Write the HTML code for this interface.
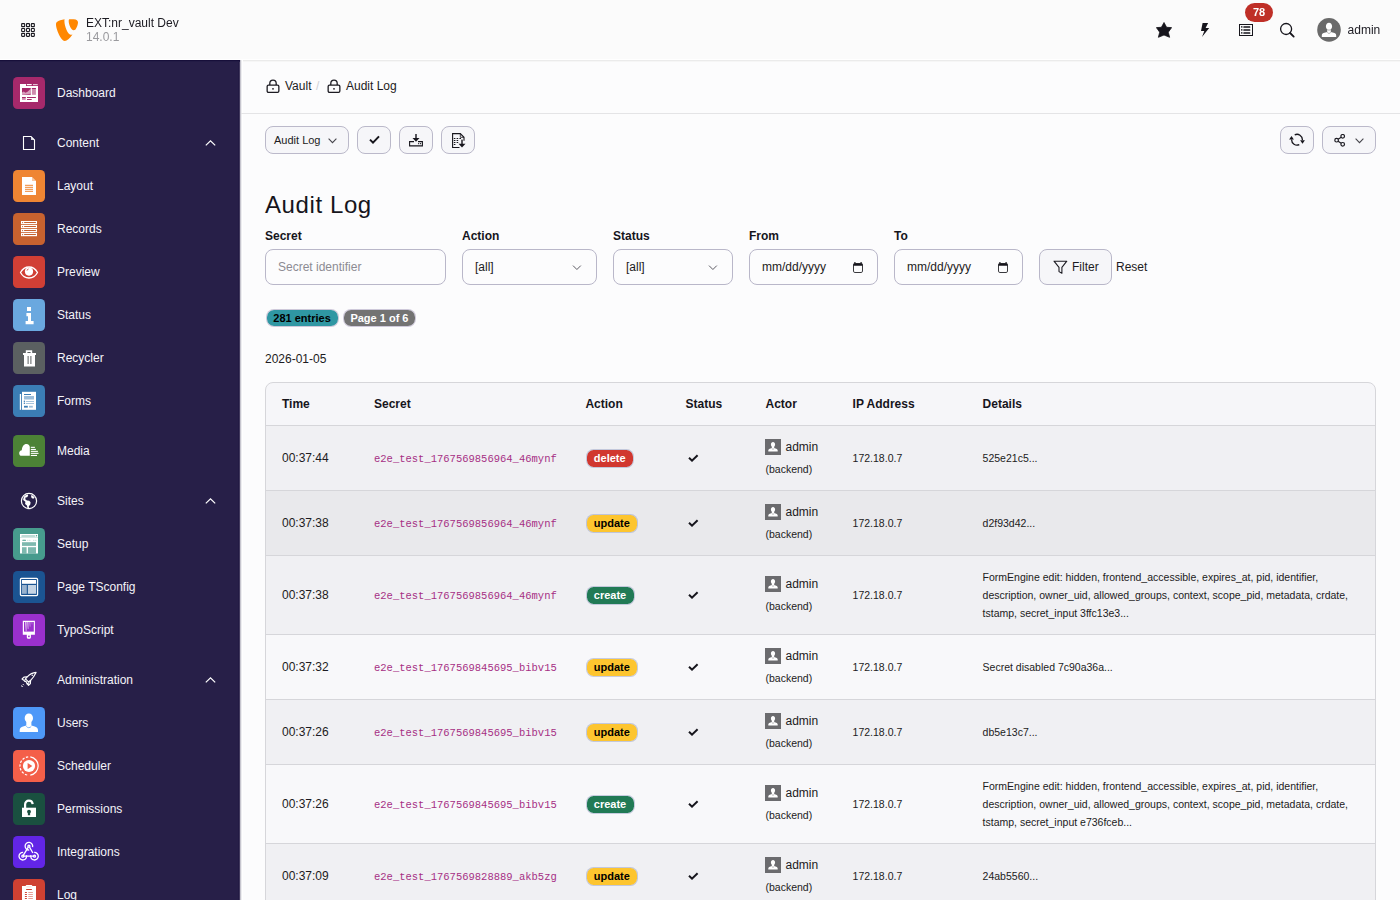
<!DOCTYPE html>
<html><head><meta charset="utf-8"><title>Audit Log</title>
<style>
*{box-sizing:border-box;margin:0;padding:0}
html,body{width:1400px;height:900px;overflow:hidden}
body{position:relative;font-family:"Liberation Sans",sans-serif;background:#fcfcfd;color:#1c1b22;font-size:12px}
.a{position:absolute}
.t{position:absolute;white-space:nowrap;line-height:14px}
svg{display:block}
#hdr{position:absolute;left:0;top:0;width:1400px;height:60px;background:#fbfbfb;border-bottom:1px solid #fff;will-change:transform}
#sb{position:absolute;left:0;top:60px;width:240px;height:840px;background:#271f48;overflow:hidden}
#sbedge{position:absolute;left:238px;top:60px;width:2px;height:840px;background:linear-gradient(90deg,#221a44 50%,#423a5e 50%)}
#sbsh{position:absolute;left:240px;top:60px;width:3px;height:840px;background:linear-gradient(90deg,#c6c5ce 33.3%,#ededf0 33.3%,#ededf0 66.6%,#fff 66.6%)}
.mi{position:absolute;left:13px;width:32px;height:32px}
.ml{position:absolute;left:57px;color:#f4f3f8;font-size:12px;line-height:14px;white-space:nowrap}
.btn{position:absolute;top:126px;height:28px;border:1px solid #bbb9ca;border-radius:8px;background:#f6f6f9}
.lbl{position:absolute;top:229px;font-weight:bold;font-size:12px;line-height:14px;color:#16151c}
.inp{position:absolute;top:249px;height:36px;border:1px solid #b9b7c9;border-radius:8px;background:#fcfcfd}
.itx{position:absolute;top:10px;font-size:12px;line-height:14px;color:#1c1b22;white-space:nowrap}
</style></head><body>

<!-- HEADER -->
<div id="hdr">
 <svg class="a" style="left:21px;top:23px" width="14" height="14" viewBox="0 0 14 14" fill="none" stroke="#1c1b22" stroke-width="1.1">
  <rect x="0.65" y="0.65" width="3" height="3" rx=".5"/><rect x="5.5" y="0.65" width="3" height="3" rx=".5"/><rect x="10.35" y="0.65" width="3" height="3" rx=".5"/>
  <rect x="0.65" y="5.5" width="3" height="3" rx=".5"/><rect x="5.5" y="5.5" width="3" height="3" rx=".5"/><rect x="10.35" y="5.5" width="3" height="3" rx=".5"/>
  <rect x="0.65" y="10.35" width="3" height="3" rx=".5"/><rect x="5.5" y="10.35" width="3" height="3" rx=".5"/><rect x="10.35" y="10.35" width="3" height="3" rx=".5"/>
 </svg>
 <svg class="a" style="left:56px;top:19px" width="22" height="22" viewBox="0 0 22 22">
  <path fill="#ff8700" d="M8.7 0.2C5.5 0.6 2.6 1.6 0.9 2.9C0.2 3.5 0 4.3 0 5.6C0 10.2 4.9 22 8.8 22C10.9 22 13.7 19.5 16.5 15.5C15.9 15.7 15.2 15.8 14.6 15.8C11.9 15.8 8.4 7.2 8.4 1.8C8.4 1 8.5 0.5 8.7 0.2Z"/>
  <path fill="#ff8700" d="M13.2 0.2C12.8 0.5 12.7 1 12.7 1.9C12.7 5.5 15.2 11.2 17.6 11.2C18.3 11.2 19 10.9 19.5 10.4C20.9 8.1 22 5.4 22 3.4C22 1.6 20.6 0.2 17.7 0.2C16.2 0.2 14.6 0.1 13.2 0.2Z"/>
 </svg>
 <div class="t" style="left:86px;top:16px;font-size:12px;color:#1c1b22">EXT:nr_vault Dev</div>
 <div class="t" style="left:86px;top:30px;font-size:12px;color:#9a9a9e">14.0.1</div>

 <!-- star -->
 <svg class="a" style="left:1156px;top:22px" width="16" height="16" viewBox="0 0 16 16"><path fill="#16151c" stroke="#16151c" stroke-width=".8" stroke-linejoin="round" d="M8 .5L10.6 5.3 15.6 5.6 12.3 10.2 13.6 15.3 8 13 2.4 15.3 3.7 10.2 .4 5.6 5.4 5.3Z"/></svg>
 <!-- bolt -->
 <svg class="a" style="left:1200px;top:22px" width="12" height="16" viewBox="0 0 12 16"><path fill="#16151c" d="M2.6 1H8.1L5.6 6H9.2L2 15.1 4.3 8.9H1Z"/></svg>
 <!-- list -->
 <svg class="a" style="left:1239px;top:24px" width="14" height="12" viewBox="0 0 14 12"><rect x=".5" y=".5" width="13" height="11" fill="none" stroke="#16151c" stroke-width="1"/><g fill="#16151c"><circle cx="2.8" cy="2.9" r=".8"/><circle cx="2.8" cy="5.9" r=".8"/><circle cx="2.8" cy="8.9" r=".8"/><rect x="4.3" y="2.2" width="7" height="1.5" rx=".5"/><rect x="4.3" y="5.2" width="7" height="1.5" rx=".5"/><rect x="4.3" y="8.2" width="7" height="1.5" rx=".5"/></g></svg>
 <!-- badge 78 -->
 <div class="a" style="left:1245px;top:3px;width:28px;height:19px;border-radius:9.5px;background:#bf2f27;color:#fff;font-weight:bold;font-size:11px;line-height:19px;text-align:center">78</div>
 <!-- search -->
 <svg class="a" style="left:1279px;top:22px" width="16" height="16" viewBox="0 0 16 16" fill="none" stroke="#16151c"><circle cx="7.1" cy="7" r="5.5" stroke-width="1.3"/><path d="M11.1 11l3.6 3.6" stroke-width="1.8" stroke-linecap="round"/></svg>
 <!-- avatar -->
 <svg class="a" style="left:1317px;top:18px" width="24" height="24" viewBox="0 0 24 24"><circle cx="12" cy="11.9" r="11.8" fill="#6a6a6a"/><path fill="#fff" d="M12 4.7c-1.8 0-3.1 1.5-3.1 3.6 0 1.3.5 2.4 1.3 3.1v2.6l-3.7 1.1c-1.3.4-1.7 1.5-1.7 2.6V19h14.4v-1.3c0-1.1-.4-2.2-1.7-2.6l-3.7-1.1v-2.6c.8-.7 1.3-1.8 1.3-3.1 0-2.1-1.3-3.6-3.1-3.6z"/><path d="M10.2 14.3c.5.7 1.1 1.1 1.8 1.1s1.3-.4 1.8-1.1M10.2 11.6c.5.3 1.1.5 1.8.5s1.3-.2 1.8-.5" stroke="#6a6a6a" stroke-width=".5" fill="none"/></svg>
 <div class="t" style="left:1347.6px;top:23px;font-size:12px;color:#1c1b22">admin</div>
</div>

<!-- SIDEBAR -->
<div id="sb">
</div>
<div id="sbedge"></div>
<div class="a" style="left:0;top:60px;width:240px;height:1px;background:#170f3a"></div><div class="a" style="left:0;top:61px;width:240px;height:1px;background:#221b45"></div>
<div class="a" style="left:240px;top:60px;width:1160px;height:1px;background:#ebebeb"></div><div class="a" style="left:240px;top:61px;width:1160px;height:1px;background:#f6f6f6"></div>
<div id="sbsh"></div>
<!--SBITEMS-->
<svg class="mi" style="top:77px" viewBox="0 0 32 32"><rect width="32" height="32" rx="4.5" fill="#a6296b"/><g transform=""><path fill="#fff" d="M7 7h6v2h12v16H7z"/><rect x="13.8" y="7" width="4.9" height="1.2" fill="#fff"/><rect x="20" y="7" width="4.7" height="1.2" fill="#fff" opacity=".7"/><rect x="9" y="11" width="8.8" height="6.8" fill="#a6296b"/><path d="M9 17.8v-2.2l1.8-1 1.7 1.2 2-1 3.3-3v5z" fill="#fff" opacity=".55"/><rect x="18.9" y="11" width="4" height="6.8" fill="#a6296b" opacity=".55"/><rect x="18.9" y="11" width="4" height="1" fill="#a6296b"/><rect x="9" y="20" width="3.7" height="2.9" fill="#a6296b" opacity=".55"/><rect x="9" y="20" width="3.7" height="1" fill="#a6296b"/><rect x="14" y="20" width="8.9" height="1" fill="#a6296b"/><rect x="14" y="22" width="4.7" height="1" fill="#a6296b"/></g></svg>
<div class="ml" style="top:86px">Dashboard</div>
<svg class="a" style="left:22px;top:135px" width="14" height="16" viewBox="0 0 14 16"><path fill="none" stroke="#fff" stroke-width="1.1" d="M1.5 1.5h7.5l3.5 3.5v9.5H1.5z"/><path fill="#fff" d="M9 1.5l3.5 3.5H9z" opacity=".8"/></svg>
<svg class="a" style="left:205px;top:140px" width="11" height="6" viewBox="0 0 11 6"><path d="M.8 5.4L5.5.9l4.7 4.5" fill="none" stroke="#fff" stroke-width="1.2"/></svg>
<div class="ml" style="top:136px">Content</div>
<svg class="mi" style="top:170px" viewBox="0 0 32 32"><rect width="32" height="32" rx="4.5" fill="#ef8533"/><g transform=""><path fill="#fff" d="M9 7h10l4 4v14H9z"/><path fill="#ef8533" opacity=".45" d="M19 7l4 4h-4z"/><path stroke="#ef8533" stroke-width="1" d="M12 15.3h8M12 17.3h8M12 19.3h8M12 21.3h8"/></g></svg>
<div class="ml" style="top:179px">Layout</div>
<svg class="mi" style="top:213px" viewBox="0 0 32 32"><rect width="32" height="32" rx="4.5" fill="#c8622f"/><g transform=""><rect x="8" y="8" width="16" height="3.2" fill="#fff"/><rect x="11" y="9.1" width="12" height="1" rx=".5" fill="#c8622f"/><circle cx="9.6" cy="9.6" r=".6" fill="#c8622f"/><rect x="8" y="12" width="16" height="3.2" fill="#fff"/><rect x="11" y="13.1" width="12" height="1" rx=".5" fill="#c8622f"/><circle cx="9.6" cy="13.6" r=".6" fill="#c8622f"/><rect x="8" y="16" width="16" height="3.2" fill="#fff"/><rect x="11" y="17.1" width="12" height="1" rx=".5" fill="#c8622f"/><circle cx="9.6" cy="17.6" r=".6" fill="#c8622f"/><rect x="8" y="20" width="16" height="3.2" fill="#fff"/><rect x="11" y="21.1" width="12" height="1" rx=".5" fill="#c8622f"/><circle cx="9.6" cy="21.6" r=".6" fill="#c8622f"/></g></svg>
<div class="ml" style="top:222px">Records</div>
<svg class="mi" style="top:256px" viewBox="0 0 32 32"><rect width="32" height="32" rx="4.5" fill="#d13f35"/><g transform=""><path fill="none" stroke="#fff" stroke-width="1.3" d="M7.5 16.5C9.5 12.8 12.5 11 16 11s6.5 1.8 8.5 5.5c-2 3.7-5 5.5-8.5 5.5s-6.5-1.8-8.5-5.5z"/><circle cx="16" cy="15.6" r="4.1" fill="#fff"/><path d="M14 14.6c.2-.9.7-1.4 1.5-1.6" stroke="#d13f35" stroke-width=".9" fill="none"/></g></svg>
<div class="ml" style="top:265px">Preview</div>
<svg class="mi" style="top:299px" viewBox="0 0 32 32"><rect width="32" height="32" rx="4.5" fill="#6aa8df"/><g transform=""><rect x="14" y="8" width="4" height="4" fill="#fff"/><path fill="#fff" d="M13.4 14h4.6v8h2.6v3.2h-8v-3.2h2.4v-4.8h-1.6z"/></g></svg>
<div class="ml" style="top:308px">Status</div>
<svg class="mi" style="top:342px" viewBox="0 0 32 32"><rect width="32" height="32" rx="4.5" fill="#5b6061"/><g transform=""><path fill="#fff" d="M12.8 8.2h6.4v2.8H23v2h-1V24.5H11V13h-1v-2h2.8zM14.4 10v1h3.2v-1z"/><rect x="14.6" y="14" width="1" height="8" fill="#5b6061"/><rect x="17.4" y="14" width="1" height="8" fill="#5b6061"/></g></svg>
<div class="ml" style="top:351px">Recycler</div>
<svg class="mi" style="top:385px" viewBox="0 0 32 32"><rect width="32" height="32" rx="4.5" fill="#3b7db5"/><g transform="translate(-1 -1)"><rect x="10" y="7.8" width="14" height="18" fill="#fff"/><rect x="7.8" y="10" width="1.3" height="15.8" fill="#fff"/><rect x="12" y="10" width="7" height="1" fill="#3b7db5"/><rect x="12" y="12" width="10" height="3.5" fill="#3b7db5" opacity=".5"/><circle cx="12.4" cy="17.3" r=".8" fill="#3b7db5"/><rect x="14" y="17" width="8" height=".9" fill="#3b7db5" opacity=".5"/><circle cx="12.4" cy="19.3" r=".8" fill="#3b7db5"/><rect x="14" y="19" width="8" height=".9" fill="#3b7db5" opacity=".5"/><rect x="12" y="21.8" width="3.8" height="1.8" fill="#3b7db5"/><rect x="17" y="21.8" width="3.8" height="1.8" fill="#3b7db5" opacity=".5"/></g></svg>
<div class="ml" style="top:394px">Forms</div>
<svg class="mi" style="top:435px" viewBox="0 0 32 32"><rect width="32" height="32" rx="4.5" fill="#4c8236"/><g transform=""><path fill="#fff" d="M16.8 20.8H8.6C7.2 20.8 6.2 19.8 6.2 18.2C6.2 16.6 7.3 15.3 8.8 15.2C9 11.5 10.8 8.9 13.5 8.9C15.5 8.9 16.8 10.3 16.8 12Z"/><g fill="#fff"><rect x="17.8" y="11.8" width="4.1" height="1.1"/><rect x="17.8" y="13.9" width="5.1" height="1.1"/><rect x="17.8" y="15.8" width="7.1" height="1.1"/><rect x="17.8" y="17.8" width="7.7" height="1.1"/><rect x="17.8" y="19.9" width="6.2" height="1.1"/></g></g></svg>
<div class="ml" style="top:444px">Media</div>
<svg class="a" style="left:20px;top:492px" width="18" height="18" viewBox="0 0 18 18"><circle cx="9" cy="9" r="7.6" fill="none" stroke="#fff" stroke-width="1.2"/><path fill="#fff" d="M4.2 4.2c1.2-1 2.4-1.6 3.6-1.8l.4 1.3-1.1 1.6-1.6.2-.2 1.7 1.6 1.4 2.3.2 1.4 1.5-.3 2.3-1.5 1.6.2 1.8c-.5.1-1 .1-1.5 0l-.6-2.5-1.8-1.6.3-2.1-2.3-1.9c.2-1.4.5-2.7 1.1-3.7zM11.3 3l1.8.8 1.6 2-1.5.9-1.6-.7-.5-1.6z"/></svg>
<svg class="a" style="left:205px;top:498px" width="11" height="6" viewBox="0 0 11 6"><path d="M.8 5.4L5.5.9l4.7 4.5" fill="none" stroke="#fff" stroke-width="1.2"/></svg>
<div class="ml" style="top:494px">Sites</div>
<svg class="mi" style="top:528px" viewBox="0 0 32 32"><rect width="32" height="32" rx="4.5" fill="#479b8d"/><g transform="translate(0 -0.8)"><rect x="7" y="6.8" width="18" height="19.5" fill="#fff"/><rect x="8.3" y="8.2" width="14" height="1" rx=".5" fill="#479b8d" opacity=".7"/><circle cx="23.5" cy="8.6" r=".7" fill="#479b8d"/><rect x="7" y="10.2" width="18" height=".6" fill="#479b8d" opacity=".4"/><rect x="9.3" y="12.6" width="3.7" height="1" rx=".5" fill="#479b8d"/><circle cx="14.8" cy="13.1" r=".5" fill="#479b8d" opacity=".5"/><circle cx="16.8" cy="13.1" r=".5" fill="#479b8d" opacity=".5"/><circle cx="20.8" cy="13.1" r=".5" fill="#479b8d" opacity=".5"/><circle cx="22.8" cy="13.1" r=".5" fill="#479b8d" opacity=".5"/><rect x="9" y="15" width="14" height="3.7" fill="#479b8d" opacity=".7"/><rect x="9" y="20" width="4.6" height="6.3" fill="#479b8d" opacity=".7"/><rect x="15" y="20" width="8" height="6.3" fill="#479b8d" opacity=".7"/></g></svg>
<div class="ml" style="top:537px">Setup</div>
<svg class="mi" style="top:571px" viewBox="0 0 32 32"><rect width="32" height="32" rx="4.5" fill="#1b5492"/><g transform=""><rect x="7.45" y="7.45" width="17.1" height="17.1" rx="1" fill="none" stroke="#fff" stroke-width="1.3"/><rect x="9" y="9" width="14" height="3.8" fill="#fff"/><rect x="9" y="14" width="4.8" height="8.8" fill="#fff" opacity=".55"/><rect x="14.9" y="14" width="8.1" height="8.8" fill="#fff" opacity=".75"/></g></svg>
<div class="ml" style="top:580px">Page TSconfig</div>
<svg class="mi" style="top:614px" viewBox="0 0 32 32"><rect width="32" height="32" rx="4.5" fill="#9a30cd"/><g transform=""><path fill="#fff" d="M9.8 6.8h12.1v14H17.9v2.4c0 .8-.6 1.5-1.4 1.5h-1.3c-.8 0-1.4-.7-1.4-1.5v-2.4H9.8z"/><rect x="11" y="8" width="9.8" height="9.6" fill="#9a30cd"/><rect x="15.1" y="21.6" width="1.6" height="1.6" fill="#9a30cd"/><path fill="#fff" d="M12.3 8h1.1v9.2h-.6z"/><path fill="#fff" opacity=".8" d="M14.3 8h1.1v7h-.6z"/><path fill="#fff" opacity=".55" d="M16.3 8h1.1v4.8h-.6z"/><path fill="#fff" opacity=".35" d="M18.3 8h1.1v2.6h-.6z"/></g></svg>
<div class="ml" style="top:623px">TypoScript</div>
<svg class="a" style="left:20px;top:671px" width="17.5" height="17.5" viewBox="0 0 16 16"><g fill="none" stroke="#fff" stroke-width="1.05" stroke-linejoin="round"><path d="M14.7 1.3C11.5 1.5 8.9 3 6.6 5.4L5 7.2 7.9 10.1l1.8-1.6c2.3-2.2 3.8-4.8 5-7.2z"/><path d="M6.6 5.4L3.6 5.6 1.9 7.3l1.8 1.4"/><path d="M9.7 8.5l-.2 3-1.7 1.7-1.4-1.8"/><path d="M5 7.2l-.9 2.2 1.8.5.5 1.8 2.3-.9"/></g><circle cx="11.2" cy="3.9" r=".7" fill="#fff"/><path stroke="#fff" stroke-width=".9" d="M1.4 13.2l1 1M2.6 12l.9.9M1.4 14.6l.8-.8"/></svg>
<svg class="a" style="left:205px;top:677px" width="11" height="6" viewBox="0 0 11 6"><path d="M.8 5.4L5.5.9l4.7 4.5" fill="none" stroke="#fff" stroke-width="1.2"/></svg>
<div class="ml" style="top:673px">Administration</div>
<svg class="mi" style="top:707px" viewBox="0 0 32 32"><rect width="32" height="32" rx="4.5" fill="#4e98f8"/><g transform=""><path fill="#fff" d="M15.8 6.6c-2.3 0-4.1 2-4.1 4.5 0 1.6.6 2.9 1.6 3.8v3.6l-3.3 1c-1.8.5-3.3 1.8-3.3 3.6V25h18.3v-1.9c0-1.8-1.5-3.1-3.3-3.6l-3.3-1v-3.6c1-.9 1.6-2.2 1.6-3.8 0-2.5-1.8-4.5-4.1-4.5z"/><path d="M13.3 19.3c.7.9 1.5 1.4 2.5 1.4s1.8-.5 2.5-1.4" stroke="#4e98f8" stroke-width=".7" fill="none"/></g></svg>
<div class="ml" style="top:716px">Users</div>
<svg class="mi" style="top:750px" viewBox="0 0 32 32"><rect width="32" height="32" rx="4.5" fill="#f45f49"/><g transform=""><path fill="none" stroke="#fff" stroke-width="1.2" d="M17.3 6.9A9.2 9.2 0 0 1 17.3 25.1"/><path fill="none" stroke="#fff" stroke-width="1.2" stroke-dasharray="2.4 1.5" d="M15.2 6.85A9.2 9.2 0 0 0 15.2 25.15"/><circle cx="16" cy="16" r="6.1" fill="#fff"/><path fill="#f45f49" d="M14.6 13v6.2l4.7-3.1z"/></g></svg>
<div class="ml" style="top:759px">Scheduler</div>
<svg class="mi" style="top:793px" viewBox="0 0 32 32"><rect width="32" height="32" rx="4.5" fill="#1a5040"/><g transform=""><path fill="none" stroke="#fff" stroke-width="2.2" d="M12.1 15.2v-3.6c0-2.3 1.6-3.9 3.8-3.9 2 0 3.5 1.3 3.8 3.4"/><rect x="9" y="14.7" width="14" height="9.3" fill="#fff"/><circle cx="16" cy="18.7" r="1.9" fill="#1a5040"/><path fill="#1a5040" d="M15.1 19.3h1.8l.3 3h-2.4z"/></g></svg>
<div class="ml" style="top:802px">Permissions</div>
<svg class="mi" style="top:836px" viewBox="0 0 32 32"><rect width="32" height="32" rx="4.5" fill="#6225e6"/><g transform=""><g fill="none" stroke="#fff" stroke-width="1.3"><path d="M16.23 13.99A3.8 3.8 0 1 1 19.57 11.18"/><path d="M13.47 19.22A3.8 3.8 0 1 1 10.13 16.41"/><path d="M21.17 16.41A3.8 3.8 0 1 1 17.83 19.22"/><circle cx="15.9" cy="10.2" r="1"/><circle cx="9.8" cy="20.2" r="1"/><circle cx="21.5" cy="20.2" r="1"/><path d="M15.3 11.2L10.4 19.2M10.8 20.2H20.5M16.5 11.2L19.9 17"/></g></g></svg>
<div class="ml" style="top:845px">Integrations</div>
<svg class="mi" style="top:879px" viewBox="0 0 32 32"><rect width="32" height="32" rx="4.5" fill="#cf4132"/><g transform=""><rect x="9" y="7" width="14" height="19" fill="#fff"/><rect x="12.7" y="5.9" width="6.6" height="2.2" rx="1" fill="#fff"/><rect x="13.5" y="7.7" width="5" height=".5" fill="#cf4132" opacity=".4"/><rect x="13" y="9.9" width="6" height="1.2" rx=".6" fill="#cf4132"/><rect x="11.8" y="12.9" width="2.2" height="1.1" rx=".5" fill="#cf4132"/><rect x="15.2" y="12.9" width="4.8" height="1.1" rx=".5" fill="#cf4132" opacity=".5"/><rect x="11.8" y="14.9" width="2.2" height="1.1" rx=".5" fill="#cf4132"/><rect x="15.2" y="14.9" width="4.8" height="1.1" rx=".5" fill="#cf4132" opacity=".5"/><rect x="11.8" y="16.9" width="2.2" height="1.1" rx=".5" fill="#cf4132"/><rect x="15.2" y="16.9" width="4.8" height="1.1" rx=".5" fill="#cf4132" opacity=".5"/><rect x="11.8" y="18.9" width="2.2" height="1.1" rx=".5" fill="#cf4132"/><rect x="15.2" y="18.9" width="4.8" height="1.1" rx=".5" fill="#cf4132" opacity=".5"/><rect x="11.8" y="20.9" width="2.2" height="1.1" rx=".5" fill="#cf4132"/><rect x="15.2" y="20.9" width="4.8" height="1.1" rx=".5" fill="#cf4132" opacity=".5"/></g></svg>
<div class="ml" style="top:888px">Log</div>

<!--/SBITEMS-->

<!-- CONTENT -->
<div id="content">
 <!-- breadcrumb -->
 <div class="a" style="left:241px;top:113px;width:1159px;height:1px;background:#e4e4e6"></div>
 <svg class="a" style="left:266px;top:79px" width="14" height="14" viewBox="0 0 14 14" fill="none" stroke="#1c1b22" stroke-width="1.3"><rect x="1.15" y="6.15" width="11.7" height="7.2" rx="1.3"/><path d="M3.8 6.1V4.4c0-1.9 1.3-3.2 3.2-3.2s3.2 1.3 3.2 3.2v1.7"/><circle cx="7" cy="9.8" r=".9" fill="#1c1b22" stroke="none"/></svg>
 <div class="t" style="left:285px;top:79px">Vault</div>
 <div class="t" style="left:316px;top:79px;color:#cfcfd4">/</div>
 <svg class="a" style="left:327px;top:79px" width="14" height="14" viewBox="0 0 14 14" fill="none" stroke="#1c1b22" stroke-width="1.3"><rect x="1.15" y="6.15" width="11.7" height="7.2" rx="1.3"/><path d="M3.8 6.1V4.4c0-1.9 1.3-3.2 3.2-3.2s3.2 1.3 3.2 3.2v1.7"/><circle cx="7" cy="9.8" r=".9" fill="#1c1b22" stroke="none"/></svg>
 <div class="t" style="left:346px;top:79px">Audit Log</div>

 <!-- toolbar -->
 <div class="btn" style="left:265px;width:84px"><div class="t" style="left:8px;top:6px;font-size:11px">Audit Log</div>
  <svg class="a" style="left:62px;top:11px" width="9" height="6" viewBox="0 0 9 6"><path d="M.6 .7l3.9 3.9L8.4.7" fill="none" stroke="#46454c" stroke-width="1.1"/></svg></div>
 <div class="btn" style="left:357px;width:34px"><svg class="a" style="left:11px;top:8px" width="11" height="9" viewBox="0 0 11 9"><path d="M1 4.6l3 3 6-6.2" fill="none" stroke="#16151c" stroke-width="2"/></svg></div>
 <div class="btn" style="left:399px;width:34px"><svg class="a" style="left:9px;top:7px" width="14" height="13" viewBox="0 0 14 13"><rect x="6.3" y="0" width="1.4" height="4.6" fill="#16151c"/><path d="M3.5 4h7L7 7.8z" fill="#16151c"/><path d="M5 7.6H.6v4.3h12.8V7.6H9" fill="none" stroke="#16151c" stroke-width="1.1"/><rect x="9.1" y="9.1" width="1.1" height="1.1" fill="#16151c"/><rect x="11" y="9.1" width="1.1" height="1.1" fill="#16151c"/></svg></div>
 <div class="btn" style="left:441px;width:34px"><svg class="a" style="left:10px;top:6px" width="15" height="16" viewBox="0 0 15 16"><path d="M7.5 14.5H.6V.6h7.7L12 4.3v3.4" fill="none" stroke="#16151c" stroke-width="1.1"/><path d="M8.3.6v3.7H12" fill="none" stroke="#16151c" stroke-width=".8"/><g fill="#16151c"><rect x="1.8" y="5" width="1.6" height="1"/><rect x="4.6" y="5" width="1.6" height="1"/><rect x="7.4" y="5" width="1.6" height="1"/><rect x="1.8" y="7" width="1.6" height="1"/><rect x="4.6" y="7" width="1.6" height="1"/><rect x="1.8" y="9" width="1.6" height="1"/><rect x="4.6" y="9" width="1.6" height="1"/><rect x="1.8" y="11" width="1.6" height="1"/><rect x="9.3" y="6.6" width="1.4" height="4.6"/><path d="M6.5 10.8h7L10 14.6z"/></g></svg></div>
 <div class="btn" style="left:1280px;width:34px"><svg class="a" style="left:7px;top:6px" width="18" height="14" viewBox="0 0 18 14"><path d="M6.72 1.81A5.4 5.4 0 0 1 14.4 6.9M11.28 11.59A5.4 5.4 0 0 1 3.6 6.5" fill="none" stroke="#16151c" stroke-width="1.3"/><path d="M12.1 7.2h4.8l-2.4 3.6zM1.1 6.6h4.8L3.5 3z" fill="#16151c"/></svg></div>
 <div class="btn" style="left:1322px;width:54px"><svg class="a" style="left:11px;top:7px" width="12" height="13" viewBox="0 0 12 13" fill="none" stroke="#1c1b22" stroke-width="1.2"><circle cx="2.6" cy="6.2" r="1.8"/><circle cx="8.7" cy="2.3" r="1.8"/><circle cx="8.7" cy="10.3" r="1.8"/><path d="M4.1 5.2l3.1-2M4.1 7.2l3.1 2"/></svg>
  <svg class="a" style="left:32px;top:11px" width="9" height="6" viewBox="0 0 9 6"><path d="M.6 .7l3.9 3.9L8.4.7" fill="none" stroke="#46454c" stroke-width="1.1"/></svg></div>

 <!-- title -->
 <div class="t" style="left:265px;top:191px;font-size:24px;line-height:28px;letter-spacing:.6px;color:#16151c">Audit Log</div>

 <!-- filters -->
 <div class="lbl" style="left:265px">Secret</div>
 <div class="lbl" style="left:462px">Action</div>
 <div class="lbl" style="left:613px">Status</div>
 <div class="lbl" style="left:749px">From</div>
 <div class="lbl" style="left:894px">To</div>
 <div class="inp" style="left:265px;width:181px"><div class="itx" style="left:12px;color:#8c8b93">Secret identifier</div></div>
 <div class="inp" style="left:462px;width:135px"><div class="itx" style="left:12px">[all]</div><svg class="a" style="left:108.5px;top:15px" width="10" height="7" viewBox="0 0 10 7"><path d="M1 .6l3.9 3.9L8.8.6" fill="none" stroke="#5c5b63" stroke-width="1"/></svg></div>
 <div class="inp" style="left:613px;width:120px"><div class="itx" style="left:12px">[all]</div><svg class="a" style="left:93.5px;top:15px" width="10" height="7" viewBox="0 0 10 7"><path d="M1 .6l3.9 3.9L8.8.6" fill="none" stroke="#5c5b63" stroke-width="1"/></svg></div>
 <div class="inp" style="left:749px;width:129px"><div class="itx" style="left:12px">mm/dd/yyyy</div><svg class="a" style="left:103px;top:12px" width="10" height="11" viewBox="0 0 10 11"><path d="M1.9 0v1.8M8.1 0v1.8" stroke="#2a2a2e" stroke-width="1.3"/><rect x=".5" y="1.5" width="9" height="9" rx="1.4" fill="none" stroke="#3a3a3e" stroke-width="1"/><rect x=".5" y="1.5" width="9" height="2.3" rx=".6" fill="#16151c"/></svg></div>
 <div class="inp" style="left:894px;width:129px"><div class="itx" style="left:12px">mm/dd/yyyy</div><svg class="a" style="left:103px;top:12px" width="10" height="11" viewBox="0 0 10 11"><path d="M1.9 0v1.8M8.1 0v1.8" stroke="#2a2a2e" stroke-width="1.3"/><rect x=".5" y="1.5" width="9" height="9" rx="1.4" fill="none" stroke="#3a3a3e" stroke-width="1"/><rect x=".5" y="1.5" width="9" height="2.3" rx=".6" fill="#16151c"/></svg></div>
 <div class="inp" style="left:1039px;width:73px;background:#f6f6f9"><svg class="a" style="left:13px;top:10px" width="15" height="15" viewBox="0 0 15 15"><path d="M1 1.2h12.8L8.9 7.3v6L6 11.6V7.3z" fill="none" stroke="#1c1b22" stroke-width="1.1" stroke-linejoin="round"/></svg><div class="itx" style="left:32px">Filter</div></div>
 <div class="t" style="left:1116px;top:260px">Reset</div>

 <!-- badges -->
 <div class="a" style="left:265.5px;top:309.3px;height:18px;padding:0 6.8px;border:1px solid rgba(150,140,175,.45);background-clip:padding-box;border-radius:8px;background-color:#2f97a3;color:#000;font-weight:bold;font-size:11px;line-height:16px;white-space:nowrap">281 entries</div>
 <div class="a" style="left:342.6px;top:309.3px;height:18px;padding:0 6.8px;border:1px solid rgba(150,140,175,.45);background-clip:padding-box;border-radius:8px;background-color:#737373;color:#fff;font-weight:bold;font-size:11px;line-height:16px;white-space:nowrap">Page 1 of 6</div>
 <div class="t" style="left:265px;top:352px">2026-01-05</div>

 <!--TABLE-->
<div class="a" style="left:265px;top:382px;width:1111px;height:600px;border:1px solid #d6d6da;border-radius:8px;background:#f6f6f9;overflow:hidden">
<div class="a" style="left:0;top:42px;width:1109px;height:65px;background:#f0f0f3;border-top:1px solid #d6d6da"></div>
<div class="a" style="left:0;top:107px;width:1109px;height:65px;background:#e9e9ec;border-top:1px solid #d6d6da"></div>
<div class="a" style="left:0;top:172px;width:1109px;height:79px;background:#f0f0f3;border-top:1px solid #d6d6da"></div>
<div class="a" style="left:0;top:251px;width:1109px;height:65px;background:#f8f8fa;border-top:1px solid #d6d6da"></div>
<div class="a" style="left:0;top:316px;width:1109px;height:65px;background:#f0f0f3;border-top:1px solid #d6d6da"></div>
<div class="a" style="left:0;top:381px;width:1109px;height:79px;background:#f8f8fa;border-top:1px solid #d6d6da"></div>
<div class="a" style="left:0;top:460px;width:1109px;height:65px;background:#f0f0f3;border-top:1px solid #d6d6da"></div>
</div>
<div class="t" style="left:282px;top:397px;font-weight:bold;color:#16151c">Time</div>
<div class="t" style="left:374px;top:397px;font-weight:bold;color:#16151c">Secret</div>
<div class="t" style="left:585.4px;top:397px;font-weight:bold;color:#16151c">Action</div>
<div class="t" style="left:685.5px;top:397px;font-weight:bold;color:#16151c">Status</div>
<div class="t" style="left:765.5px;top:397px;font-weight:bold;color:#16151c">Actor</div>
<div class="t" style="left:852.6px;top:397px;font-weight:bold;color:#16151c">IP Address</div>
<div class="t" style="left:982.6px;top:397px;font-weight:bold;color:#16151c">Details</div>
<div class="t" style="left:282px;top:451px">00:37:44</div>
<div class="t" style="left:374px;top:452px;font-family:'Liberation Mono',monospace;font-size:10.5px;color:#a62f84">e2e_test_1767569856964_46mynf</div>
<div class="a" style="left:585.5px;top:449px;height:18.5px;padding:0 7.3px;border:1px solid rgba(150,160,195,.5);background-clip:padding-box;border-radius:7.5px;background-color:#d1372f;color:#fff;font-weight:bold;font-size:11px;line-height:16.3px;white-space:nowrap">delete</div>
<svg class="a" style="left:688px;top:454px" width="11" height="9" viewBox="0 0 11 9"><path d="M1 3.8L4 6.7 9.6 1.2" fill="none" stroke="#16151c" stroke-width="2"/></svg>
<svg class="a" style="left:765px;top:439px" width="16" height="16" viewBox="0 0 16 16"><rect width="16" height="16" fill="#6b6b6e"/><path fill="#fff" d="M8 3c-1.2 0-2.1 1.1-2.1 2.5 0 .9.4 1.7.9 2.2v1.4l-2 .6C3.9 10 3.3 10.8 3.3 11.6v1h9.4v-1c0-.8-.6-1.6-1.5-1.9l-2-.6V7.7c.5-.5.9-1.3.9-2.2C10.1 4.1 9.2 3 8 3z"/><path d="M6.8 9.5c.3.4.7.6 1.2.6s.9-.2 1.2-.6" stroke="#6b6b6e" stroke-width=".5" fill="none"/></svg>
<div class="t" style="left:785.5px;top:440px">admin</div>
<div class="t" style="left:765.5px;top:462px;font-size:10.5px">(backend)</div>
<div class="t" style="left:852.6px;top:451px;font-size:10.5px">172.18.0.7</div>
<div class="t" style="left:982.6px;top:451px;font-size:10.5px">525e21c5...</div>
<div class="t" style="left:282px;top:516px">00:37:38</div>
<div class="t" style="left:374px;top:517px;font-family:'Liberation Mono',monospace;font-size:10.5px;color:#a62f84">e2e_test_1767569856964_46mynf</div>
<div class="a" style="left:585.5px;top:514px;height:18.5px;padding:0 7.3px;border:1px solid rgba(150,160,195,.5);background-clip:padding-box;border-radius:7.5px;background-color:#fdc52f;color:#000;font-weight:bold;font-size:11px;line-height:16.3px;white-space:nowrap">update</div>
<svg class="a" style="left:688px;top:519px" width="11" height="9" viewBox="0 0 11 9"><path d="M1 3.8L4 6.7 9.6 1.2" fill="none" stroke="#16151c" stroke-width="2"/></svg>
<svg class="a" style="left:765px;top:504px" width="16" height="16" viewBox="0 0 16 16"><rect width="16" height="16" fill="#6b6b6e"/><path fill="#fff" d="M8 3c-1.2 0-2.1 1.1-2.1 2.5 0 .9.4 1.7.9 2.2v1.4l-2 .6C3.9 10 3.3 10.8 3.3 11.6v1h9.4v-1c0-.8-.6-1.6-1.5-1.9l-2-.6V7.7c.5-.5.9-1.3.9-2.2C10.1 4.1 9.2 3 8 3z"/><path d="M6.8 9.5c.3.4.7.6 1.2.6s.9-.2 1.2-.6" stroke="#6b6b6e" stroke-width=".5" fill="none"/></svg>
<div class="t" style="left:785.5px;top:505px">admin</div>
<div class="t" style="left:765.5px;top:527px;font-size:10.5px">(backend)</div>
<div class="t" style="left:852.6px;top:516px;font-size:10.5px">172.18.0.7</div>
<div class="t" style="left:982.6px;top:516px;font-size:10.5px">d2f93d42...</div>
<div class="t" style="left:282px;top:588px">00:37:38</div>
<div class="t" style="left:374px;top:589px;font-family:'Liberation Mono',monospace;font-size:10.5px;color:#a62f84">e2e_test_1767569856964_46mynf</div>
<div class="a" style="left:585.5px;top:586px;height:18.5px;padding:0 7.3px;border:1px solid rgba(150,160,195,.5);background-clip:padding-box;border-radius:7.5px;background-color:#217a55;color:#fff;font-weight:bold;font-size:11px;line-height:16.3px;white-space:nowrap">create</div>
<svg class="a" style="left:688px;top:591px" width="11" height="9" viewBox="0 0 11 9"><path d="M1 3.8L4 6.7 9.6 1.2" fill="none" stroke="#16151c" stroke-width="2"/></svg>
<svg class="a" style="left:765px;top:576px" width="16" height="16" viewBox="0 0 16 16"><rect width="16" height="16" fill="#6b6b6e"/><path fill="#fff" d="M8 3c-1.2 0-2.1 1.1-2.1 2.5 0 .9.4 1.7.9 2.2v1.4l-2 .6C3.9 10 3.3 10.8 3.3 11.6v1h9.4v-1c0-.8-.6-1.6-1.5-1.9l-2-.6V7.7c.5-.5.9-1.3.9-2.2C10.1 4.1 9.2 3 8 3z"/><path d="M6.8 9.5c.3.4.7.6 1.2.6s.9-.2 1.2-.6" stroke="#6b6b6e" stroke-width=".5" fill="none"/></svg>
<div class="t" style="left:785.5px;top:577px">admin</div>
<div class="t" style="left:765.5px;top:599px;font-size:10.5px">(backend)</div>
<div class="t" style="left:852.6px;top:588px;font-size:10.5px">172.18.0.7</div>
<div class="t" style="left:982.6px;top:570px;font-size:10.5px">FormEngine edit: hidden, frontend_accessible, expires_at, pid, identifier,</div>
<div class="t" style="left:982.6px;top:588px;font-size:10.5px">description, owner_uid, allowed_groups, context, scope_pid, metadata, crdate,</div>
<div class="t" style="left:982.6px;top:606px;font-size:10.5px">tstamp, secret_input 3ffc13e3...</div>
<div class="t" style="left:282px;top:660px">00:37:32</div>
<div class="t" style="left:374px;top:661px;font-family:'Liberation Mono',monospace;font-size:10.5px;color:#a62f84">e2e_test_1767569845695_bibv15</div>
<div class="a" style="left:585.5px;top:658px;height:18.5px;padding:0 7.3px;border:1px solid rgba(150,160,195,.5);background-clip:padding-box;border-radius:7.5px;background-color:#fdc52f;color:#000;font-weight:bold;font-size:11px;line-height:16.3px;white-space:nowrap">update</div>
<svg class="a" style="left:688px;top:663px" width="11" height="9" viewBox="0 0 11 9"><path d="M1 3.8L4 6.7 9.6 1.2" fill="none" stroke="#16151c" stroke-width="2"/></svg>
<svg class="a" style="left:765px;top:648px" width="16" height="16" viewBox="0 0 16 16"><rect width="16" height="16" fill="#6b6b6e"/><path fill="#fff" d="M8 3c-1.2 0-2.1 1.1-2.1 2.5 0 .9.4 1.7.9 2.2v1.4l-2 .6C3.9 10 3.3 10.8 3.3 11.6v1h9.4v-1c0-.8-.6-1.6-1.5-1.9l-2-.6V7.7c.5-.5.9-1.3.9-2.2C10.1 4.1 9.2 3 8 3z"/><path d="M6.8 9.5c.3.4.7.6 1.2.6s.9-.2 1.2-.6" stroke="#6b6b6e" stroke-width=".5" fill="none"/></svg>
<div class="t" style="left:785.5px;top:649px">admin</div>
<div class="t" style="left:765.5px;top:671px;font-size:10.5px">(backend)</div>
<div class="t" style="left:852.6px;top:660px;font-size:10.5px">172.18.0.7</div>
<div class="t" style="left:982.6px;top:660px;font-size:10.5px">Secret disabled 7c90a36a...</div>
<div class="t" style="left:282px;top:725px">00:37:26</div>
<div class="t" style="left:374px;top:726px;font-family:'Liberation Mono',monospace;font-size:10.5px;color:#a62f84">e2e_test_1767569845695_bibv15</div>
<div class="a" style="left:585.5px;top:723px;height:18.5px;padding:0 7.3px;border:1px solid rgba(150,160,195,.5);background-clip:padding-box;border-radius:7.5px;background-color:#fdc52f;color:#000;font-weight:bold;font-size:11px;line-height:16.3px;white-space:nowrap">update</div>
<svg class="a" style="left:688px;top:728px" width="11" height="9" viewBox="0 0 11 9"><path d="M1 3.8L4 6.7 9.6 1.2" fill="none" stroke="#16151c" stroke-width="2"/></svg>
<svg class="a" style="left:765px;top:713px" width="16" height="16" viewBox="0 0 16 16"><rect width="16" height="16" fill="#6b6b6e"/><path fill="#fff" d="M8 3c-1.2 0-2.1 1.1-2.1 2.5 0 .9.4 1.7.9 2.2v1.4l-2 .6C3.9 10 3.3 10.8 3.3 11.6v1h9.4v-1c0-.8-.6-1.6-1.5-1.9l-2-.6V7.7c.5-.5.9-1.3.9-2.2C10.1 4.1 9.2 3 8 3z"/><path d="M6.8 9.5c.3.4.7.6 1.2.6s.9-.2 1.2-.6" stroke="#6b6b6e" stroke-width=".5" fill="none"/></svg>
<div class="t" style="left:785.5px;top:714px">admin</div>
<div class="t" style="left:765.5px;top:736px;font-size:10.5px">(backend)</div>
<div class="t" style="left:852.6px;top:725px;font-size:10.5px">172.18.0.7</div>
<div class="t" style="left:982.6px;top:725px;font-size:10.5px">db5e13c7...</div>
<div class="t" style="left:282px;top:797px">00:37:26</div>
<div class="t" style="left:374px;top:798px;font-family:'Liberation Mono',monospace;font-size:10.5px;color:#a62f84">e2e_test_1767569845695_bibv15</div>
<div class="a" style="left:585.5px;top:795px;height:18.5px;padding:0 7.3px;border:1px solid rgba(150,160,195,.5);background-clip:padding-box;border-radius:7.5px;background-color:#217a55;color:#fff;font-weight:bold;font-size:11px;line-height:16.3px;white-space:nowrap">create</div>
<svg class="a" style="left:688px;top:800px" width="11" height="9" viewBox="0 0 11 9"><path d="M1 3.8L4 6.7 9.6 1.2" fill="none" stroke="#16151c" stroke-width="2"/></svg>
<svg class="a" style="left:765px;top:785px" width="16" height="16" viewBox="0 0 16 16"><rect width="16" height="16" fill="#6b6b6e"/><path fill="#fff" d="M8 3c-1.2 0-2.1 1.1-2.1 2.5 0 .9.4 1.7.9 2.2v1.4l-2 .6C3.9 10 3.3 10.8 3.3 11.6v1h9.4v-1c0-.8-.6-1.6-1.5-1.9l-2-.6V7.7c.5-.5.9-1.3.9-2.2C10.1 4.1 9.2 3 8 3z"/><path d="M6.8 9.5c.3.4.7.6 1.2.6s.9-.2 1.2-.6" stroke="#6b6b6e" stroke-width=".5" fill="none"/></svg>
<div class="t" style="left:785.5px;top:786px">admin</div>
<div class="t" style="left:765.5px;top:808px;font-size:10.5px">(backend)</div>
<div class="t" style="left:852.6px;top:797px;font-size:10.5px">172.18.0.7</div>
<div class="t" style="left:982.6px;top:779px;font-size:10.5px">FormEngine edit: hidden, frontend_accessible, expires_at, pid, identifier,</div>
<div class="t" style="left:982.6px;top:797px;font-size:10.5px">description, owner_uid, allowed_groups, context, scope_pid, metadata, crdate,</div>
<div class="t" style="left:982.6px;top:815px;font-size:10.5px">tstamp, secret_input e736fceb...</div>
<div class="t" style="left:282px;top:869px">00:37:09</div>
<div class="t" style="left:374px;top:870px;font-family:'Liberation Mono',monospace;font-size:10.5px;color:#a62f84">e2e_test_1767569828889_akb5zg</div>
<div class="a" style="left:585.5px;top:867px;height:18.5px;padding:0 7.3px;border:1px solid rgba(150,160,195,.5);background-clip:padding-box;border-radius:7.5px;background-color:#fdc52f;color:#000;font-weight:bold;font-size:11px;line-height:16.3px;white-space:nowrap">update</div>
<svg class="a" style="left:688px;top:872px" width="11" height="9" viewBox="0 0 11 9"><path d="M1 3.8L4 6.7 9.6 1.2" fill="none" stroke="#16151c" stroke-width="2"/></svg>
<svg class="a" style="left:765px;top:857px" width="16" height="16" viewBox="0 0 16 16"><rect width="16" height="16" fill="#6b6b6e"/><path fill="#fff" d="M8 3c-1.2 0-2.1 1.1-2.1 2.5 0 .9.4 1.7.9 2.2v1.4l-2 .6C3.9 10 3.3 10.8 3.3 11.6v1h9.4v-1c0-.8-.6-1.6-1.5-1.9l-2-.6V7.7c.5-.5.9-1.3.9-2.2C10.1 4.1 9.2 3 8 3z"/><path d="M6.8 9.5c.3.4.7.6 1.2.6s.9-.2 1.2-.6" stroke="#6b6b6e" stroke-width=".5" fill="none"/></svg>
<div class="t" style="left:785.5px;top:858px">admin</div>
<div class="t" style="left:765.5px;top:880px;font-size:10.5px">(backend)</div>
<div class="t" style="left:852.6px;top:869px;font-size:10.5px">172.18.0.7</div>
<div class="t" style="left:982.6px;top:869px;font-size:10.5px">24ab5560...</div>

<!--/TABLE-->
</div>

</body></html>
